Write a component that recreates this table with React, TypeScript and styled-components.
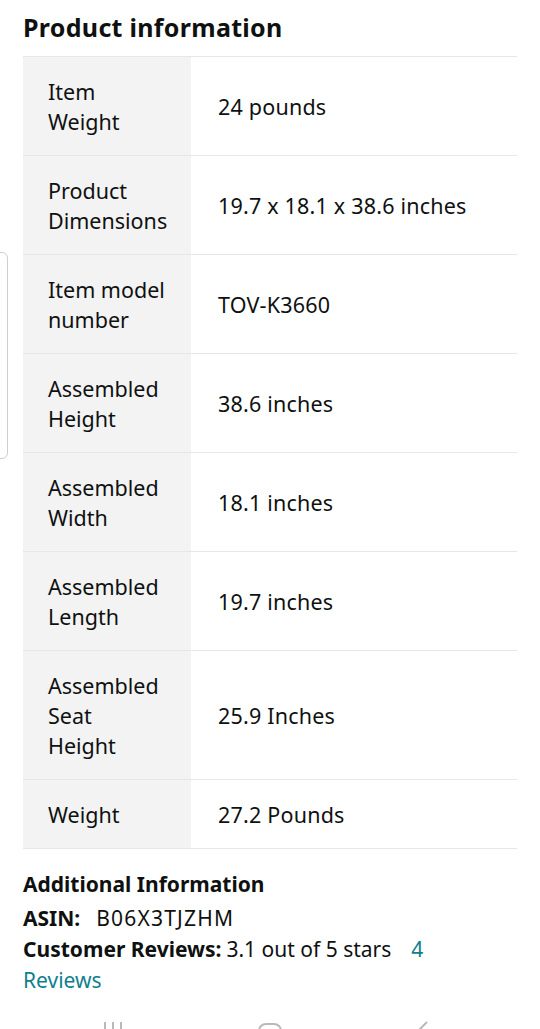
import styled, { createGlobalStyle } from "styled-components";

const GlobalStyle = createGlobalStyle`
  html, body {
    margin: 0;
    padding: 0;
    background: #fff;
  }
  body {
    font-family: "Noto Sans", "Open Sans", Arial, sans-serif;
    color: #0f1111;
    overflow: hidden;
  }
`

const Page = styled.div`
  position: relative;
  width: 540px;
  height: 1029px;
  overflow: hidden;
  padding: 0 23px;
  box-sizing: border-box;
`

const Title = styled.h2`
  margin: 0;
  padding-top: 11px;
  height: 56px;
  box-sizing: border-box;
  font-size: 25px;
  line-height: 32px;
  font-weight: 700;
  letter-spacing: 0.3px;
`

const Table = styled.table`
  width: 100%;
  border-collapse: collapse;
  border-top: 1px solid #e7e7e7;
`

const Row = styled.tr`
  border-bottom: 1px solid #e7e7e7;
`

const Label = styled.th`
  width: 168px;
  box-sizing: border-box;
  background: #f3f3f3;
  padding: 20px 10px 18px 25px;
  text-align: left;
  font-weight: 400;
  font-size: 21.5px;
  line-height: 30px;
  vertical-align: middle;
  white-space: nowrap;
`

const Value = styled.td`
  padding: 20px 10px 18px 27px;
  font-size: 21.5px;
  line-height: 30px;
  vertical-align: middle;
  letter-spacing: 0.2px;
`

const Extra = styled.section`
  margin-top: 20px;
  font-size: 21px;
  line-height: 31px;
`

const ExtraTitle = styled.h3`
  margin: 0 0 3px;
  font-size: 21px;
  line-height: 31px;
  font-weight: 700;
`

const Line = styled.div`
  margin: 0;
`

const Key = styled.b<{ $gap?: number }>`
  font-weight: 700;
  margin-right: ${(p) => p.$gap ?? 5}px;
`

const Code = styled.span`
  letter-spacing: 1.2px;
`

const Link = styled.a`
  color: #0f7f8f;
  text-decoration: none;
  margin-left: 20px;
`

const SideTab = styled.div`
  position: absolute;
  left: -10px;
  top: 252px;
  width: 16px;
  height: 205px;
  border: 1px solid #cfcfcf;
  border-radius: 6px;
`

const NavBar = styled.div`
  position: absolute;
  left: 0;
  right: 0;
  top: 1019px;
  height: 30px;
  display: flex;
  justify-content: space-between;
  padding: 0 111px 0 102px;
  color: #b9b9b9;
`

const rows: [string[], string][] = [
  [["Item", "Weight"], "24 pounds"],
  [["Product", "Dimensions"], "19.7 x 18.1 x 38.6 inches"],
  [["Item model", "number"], "TOV-K3660"],
  [["Assembled", "Height"], "38.6 inches"],
  [["Assembled", "Width"], "18.1 inches"],
  [["Assembled", "Length"], "19.7 inches"],
  [["Assembled", "Seat", "Height"], "25.9 Inches"],
  [["Weight"], "27.2 Pounds"],
]

export default function App() {
  return (
    <>
      <GlobalStyle />
      <Page>
        <Title>Product information</Title>
        <Table>
          <tbody>
            {rows.map(([k, v]) => (
              <Row key={k.join(" ")}>
                <Label>
                  {k.map((l, i) => (
                    <span key={i}>
                      {i > 0 && <br />}
                      {l}
                    </span>
                  ))}
                </Label>
                <Value>{v}</Value>
              </Row>
            ))}
          </tbody>
        </Table>
        <Extra>
          <ExtraTitle>Additional Information</ExtraTitle>
          <Line>
            <Key $gap={16}>ASIN:</Key>
            <Code>B06X3TJZHM</Code>
          </Line>
          <Line>
            <Key>Customer Reviews:</Key>3.1 out of 5 stars
            <Link href="#">
              4<br />
              Reviews
            </Link>
          </Line>
        </Extra>
        <SideTab />
        <NavBar>
          <svg width="22" height="24" viewBox="0 0 22 24" fill="none" stroke="currentColor" strokeWidth="2">
            <path d="M3 3v18M11 3v18M19 3v18" />
          </svg>
          <svg width="26" height="26" viewBox="0 0 26 26" fill="none" stroke="currentColor" strokeWidth="2">
            <rect x="2" y="5" width="22" height="20" rx="7" />
          </svg>
          <svg width="14" height="24" viewBox="0 0 14 24" fill="none" stroke="currentColor" strokeWidth="2">
            <path d="M12 3L3 12l9 9" />
          </svg>
        </NavBar>
      </Page>
    </>
  )
}
